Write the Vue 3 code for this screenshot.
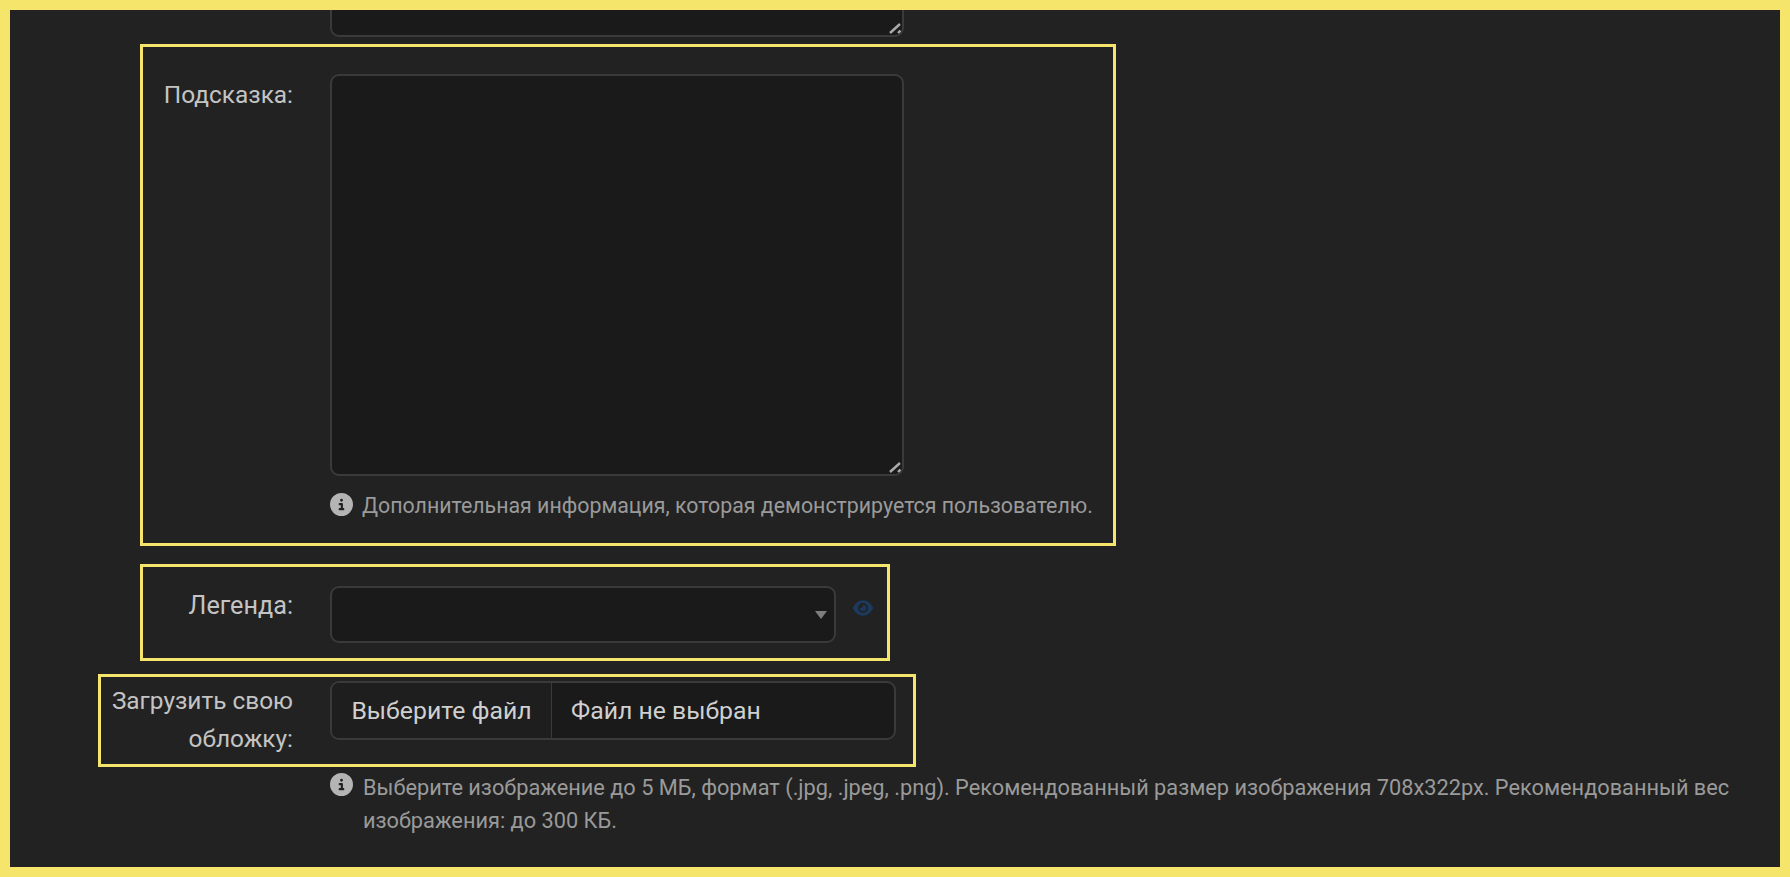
<script setup>
const eye = 'M288 32c-80.8 0-145.5 36.8-192.6 80.6C48.6 156 17.3 208 2.5 243.7c-3.3 7.9-3.3 16.7 0 24.6C17.3 304 48.6 356 95.4 399.4C142.5 443.2 207.2 480 288 480s145.5-36.8 192.6-80.6c46.8-43.5 78.1-95.4 93-131.1c3.3-7.9 3.3-16.7 0-24.6c-14.9-35.7-46.2-87.7-93-131.1C433.5 68.8 368.8 32 288 32zM144 256a144 144 0 1 1 288 0 144 144 0 1 1 -288 0zm144-64c0 35.3-28.7 64-64 64c-7.1 0-13.9-1.2-20.3-3.3c-5.5-1.8-11.9 1.6-11.7 7.4c.3 6.9 1.3 13.8 3.2 20.7c13.7 51.2 66.4 81.6 117.6 67.9s81.6-66.4 67.9-117.6c-11.1-41.5-47.8-69.4-88.6-71.1c-5.8-.2-9.2 6.1-7.4 11.7c2.1 6.4 3.3 13.2 3.3 20.3z'
const info = 'M256 512A256 256 0 1 0 256 0a256 256 0 1 0 0 512zM216 336h24V272H216c-13.3 0-24-10.7-24-24s10.7-24 24-24h48c13.3 0 24 10.7 24 24v88h8c13.3 0 24 10.7 24 24s-10.7 24-24 24H216c-13.3 0-24-10.7-24-24s10.7-24 24-24zm40-208a32 32 0 1 1 0 64 32 32 0 1 1 0-64z'
</script>

<template>
  <div class="frame">
    <div class="area-wrap area-wrap-top">
      <textarea class="area"></textarea>
      <svg class="grip" viewBox="0 0 14 14"><path d="M3 13 13 4M11 13 13.5 10.5" /></svg>
    </div>

    <section class="box box-hint">
      <label class="label">Подсказка:</label>
      <div class="field">
        <div class="area-wrap area-wrap-main">
          <textarea class="area"></textarea>
          <svg class="grip" viewBox="0 0 14 14"><path d="M3 13 13 4M11 13 13.5 10.5" /></svg>
        </div>
        <p class="help">
          <svg class="info" viewBox="0 0 512 512"><path :d="info" /></svg>
          <span>Дополнительная информация, которая демонстрируется пользователю.</span>
        </p>
      </div>
    </section>

    <section class="box box-legend">
      <label class="label">Легенда:</label>
      <div class="select-wrap">
        <select class="select"></select>
        <i class="arrow"></i>
      </div>
      <svg class="eye" viewBox="0 0 576 512"><path :d="eye" /></svg>
    </section>

    <section class="box box-file">
      <label class="label">Загрузить свою обложку:</label>
      <div class="file">
        <button type="button" class="file-btn">Выберите файл</button>
        <span class="file-name">Файл не выбран</span>
      </div>
    </section>

    <p class="help help-file">
      <svg class="info" viewBox="0 0 512 512"><path :d="info" /></svg>
      <span>Выберите изображение до 5 МБ, формат (.jpg, .jpeg, .png). Рекомендованный размер изображения 708x322px. Рекомендованный вес изображения: до 300 КБ.</span>
    </p>
  </div>
</template>

<style>
html, body { margin: 0; background: #222; }
</style>

<style scoped>
.frame {
  box-sizing: border-box;
  width: 1790px;
  height: 877px;
  border: 10px solid #f5e56b;
  background: #222;
  overflow: hidden;
  display: flex;
  flex-direction: column;
  align-items: flex-start;
  font-family: Roboto, "Liberation Sans", sans-serif;
  color-scheme: dark;
}
.area-wrap {
  position: relative;
  flex: none;
  width: 574px;
}
.area-wrap-top {
  height: 101px;
  margin: -74px 0 -1px 320px;
}
.area-wrap-main { height: 402px; }
.area {
  display: block;
  box-sizing: border-box;
  width: 100%;
  height: 100%;
  margin: 0;
  background: #1a1a1a;
  border: 2px solid #3a3a3a;
  border-radius: 9px;
  outline: none;
  resize: none;
}
.grip {
  position: absolute;
  right: 3px;
  bottom: 3px;
  width: 14px;
  height: 14px;
  fill: none;
  stroke: #aaa;
  stroke-width: 2.4;
}
.box {
  box-sizing: border-box;
  flex: none;
  display: flex;
  align-items: flex-start;
  border: 3px solid #f5e56b;
}
.box-hint {
  width: 976px;
  height: 502px;
  margin: 8px 0 0 130px;
  padding-top: 27px;
}
.box-legend {
  width: 750px;
  height: 97px;
  margin: 18px 0 0 130px;
  padding-top: 19px;
}
.box-file {
  width: 818px;
  height: 93px;
  margin: 13px 0 0 88px;
  padding-top: 4px;
}
.label {
  box-sizing: border-box;
  flex: none;
  width: 187px;
  padding-right: 37px;
  text-align: right;
  font-size: 24.4px;
  line-height: 38px;
  color: #c4c4c4;
}
.box-hint .label { margin-top: 2px; }
.box-legend .label { margin-top: 1px; font-size: 25.2px; }
.box-file .label { width: 229px; padding-left: 8px; margin-top: 1px; }
.field { flex: none; }
.help {
  display: flex;
  align-items: flex-start;
  gap: 9px;
  margin: 0;
  font-size: 21.35px;
  line-height: 33px;
  color: #9a9a9a;
}
.box-hint .help { margin-top: 13px; white-space: nowrap; }
.help-file {
  flex: none;
  gap: 10px;
  margin: 4px 0 0 320px;
  width: 1430px;
  font-size: 21.75px;
}
.help-file .info { margin-top: 2px; }
.info {
  flex: none;
  width: 23px;
  height: 23px;
  margin-top: 4px;
  fill: #b4b4b4;
}
.select-wrap {
  position: relative;
  flex: none;
  width: 506px;
  height: 57px;
}
.select {
  display: block;
  box-sizing: border-box;
  width: 100%;
  height: 100%;
  appearance: none;
  background: #1a1a1a;
  border: 2px solid #3a3a3a;
  border-radius: 9px;
  outline: none;
}
.arrow {
  position: absolute;
  right: 9px;
  top: 25px;
  width: 0;
  height: 0;
  border-left: 6px solid transparent;
  border-right: 6px solid transparent;
  border-top: 8px solid #7e7e7e;
}
.eye {
  flex: none;
  width: 20px;
  height: 18px;
  margin: 13px 0 0 17px;
  fill: #1c3a5e;
}
.file {
  box-sizing: border-box;
  flex: none;
  display: flex;
  align-items: stretch;
  width: 566px;
  height: 59px;
  background: #1a1a1a;
  border: 2px solid #3a3a3a;
  border-radius: 9px;
  overflow: hidden;
  font-size: 24.8px;
  color: #d0d0d0;
}
.file-btn {
  flex: none;
  box-sizing: border-box;
  width: 220px;
  padding: 0;
  background: #1e1e1e;
  border: 0;
  border-right: 1px solid #3a3a3a;
  font: inherit;
  color: inherit;
}
.file-name {
  display: flex;
  align-items: center;
  padding-left: 19px;
}
</style>
